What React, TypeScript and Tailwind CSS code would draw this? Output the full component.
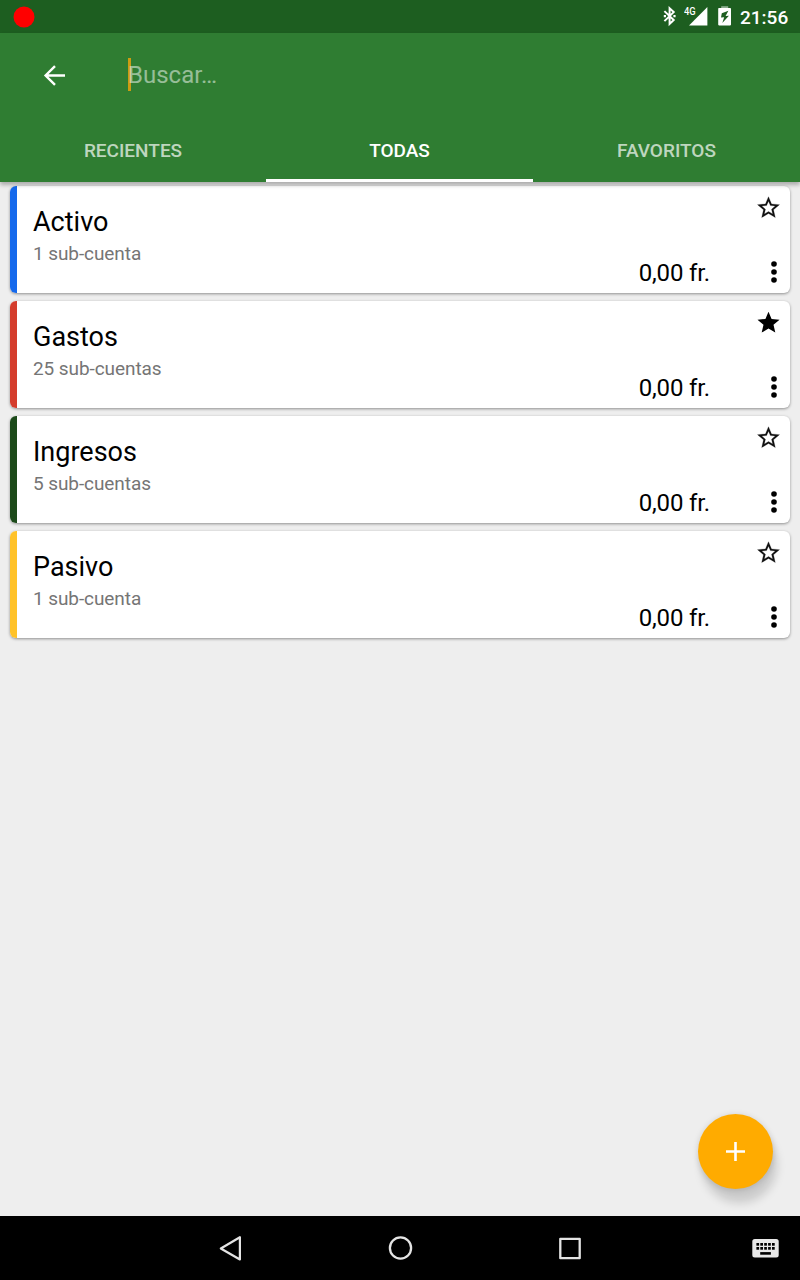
import React from "react";

type Account = { name: string; detail: string; stripe: string; favorite: boolean };

const accounts: Account[] = [
  { name: "Activo", detail: "1 sub-cuenta", stripe: "bg-[#1569ec]", favorite: false },
  { name: "Gastos", detail: "25 sub-cuentas", stripe: "bg-[#d43c2c]", favorite: true },
  { name: "Ingresos", detail: "5 sub-cuentas", stripe: "bg-[#1c4a1a]", favorite: false },
  { name: "Pasivo", detail: "1 sub-cuenta", stripe: "bg-[#ffc229]", favorite: false },
];

function StatusBar() {
  return (
    <div className="flex h-[33px] shrink-0 items-center bg-[#1d5e20] pl-[13px] pr-[11px] text-white">
      <svg width="22" height="22" viewBox="0 0 22 22">
        <circle cx="11" cy="11" r="10.5" fill="#ff0000" />
      </svg>
      <div className="ml-auto flex h-full items-center">
        <svg className="mr-[7px]" width="14" height="33" viewBox="0 0 14 33" fill="none" stroke="#fff" strokeWidth="2">
          <path d="M1.4 11.1l9.3 9-4.1 3.8V8.3l4.1 3.8-9.3 9" />
          <path d="M0.8 15h2.2v2.3H0.8zM10.4 15h2.2v2.3h-2.2z" fill="#fff" stroke="none" />
        </svg>
        <div className="mr-[10px] flex h-full w-[24px] items-start">
          <span className="mt-[6px] w-0 origin-left scale-x-[0.85] font-[Roboto] text-[11px] leading-[12px] font-medium">4G</span>
          <svg width="24" height="33" viewBox="0 0 24 33">
            <path d="M23.4 7v18.4H5z" fill="#fff" />
          </svg>
        </div>
        <svg className="mr-[8px]" width="14" height="33" viewBox="0 0 14 33">
          <path d="M3.2 6.2h7V8h-7z" fill="#8eaf90" />
          <path d="M1 8h11.2q.8 0 .8.8v15.8q0 .8-.8.8H1q-.8 0-.8-.8V8.8Q.2 8 1 8z" fill="#fff" />
          <path d="M10.4 10.8L3.8 13.2 3 17.5l3.2-.3-1.9 5.7 6.6-7.2-3.3.2z" fill="#1d5e20" />
        </svg>
        <span className="w-[49px] whitespace-nowrap pt-[2px] text-[19px] leading-[22px] font-medium">21:56</span>
      </div>
    </div>
  );
}

function Header() {
  return (
    <header className="z-10 flex h-[149px] shrink-0 flex-col bg-[#2f7d32] text-white shadow-[0_3px_4px_rgba(0,0,0,0.28)]">
      <div className="flex h-[85px] items-center pl-[43px]">
        <svg width="24" height="24" viewBox="0 0 24 24" fill="none" stroke="#fff" strokeWidth="2.4">
          <path d="M12 2.2L2.6 11.5 12 20.8M2.6 11.5H22" />
        </svg>
        <div className="mb-[2px] ml-[61px] flex h-[33px] items-center">
          <span className="h-[33px] w-[3px] bg-[#cb9c12]" />
          <span className="-ml-[3px] text-[24px] leading-[32px] text-white/50">Buscar…</span>
        </div>
      </div>
      <nav className="grid h-[64px] grid-cols-[266px_267px_267px] grid-rows-[64px] text-center text-[19px] leading-[66px] font-medium">
        <span className="text-white/70">RECIENTES</span>
        <span className="h-[64px] border-b-[3px] border-white">TODAS</span>
        <span className="text-white/70">FAVORITOS</span>
      </nav>
    </header>
  );
}

function AccountCard({ account }: { account: Account }) {
  return (
    <article className="flex h-[107px] overflow-hidden rounded-[6px] bg-white shadow-[0_1px_3px_rgba(0,0,0,0.4)]">
      <div className={`w-[7px] ${account.stripe}`} />
      <div className="flex-1 pl-4 pt-5">
        <h2 className="text-[27px] leading-[32px] text-black">{account.name}</h2>
        <p className="text-[19px] leading-[32px] tracking-[-0.08px] text-[#757575]">{account.detail}</p>
      </div>
      <p className="self-end pb-1 text-[24px] leading-[32px] tracking-[-0.15px] text-black">0,00 fr.</p>
      <div className="flex w-[80px] flex-col items-end justify-between pb-2 pt-[9px]">
        <svg className="mr-[9px]" width="26" height="26" viewBox="-0.25 0.5 23.6 23.6" fill="#111">
          {account.favorite ? (
            <path d="M12 17.27L18.18 21l-1.64-7.03L22 9.24l-7.19-.61L12 2 9.19 8.63 2 9.24l5.46 4.73L5.82 21z" fill="#000" />
          ) : (
            <path d="M22 9.24l-7.19-.62L12 2 9.19 8.63 2 9.24l5.46 4.73L5.82 21 12 17.27 18.18 21l-1.63-7.03L22 9.24zM12 15.4l-3.76 2.27 1-4.28-3.32-2.88 4.38-.38L12 6.1l1.71 4.04 4.38.38-3.32 2.88 1 4.28L12 15.4z" stroke="#111" strokeWidth="0.2" />
          )}
        </svg>
        <svg className="mr-3" width="8" height="26" viewBox="0 0 8 26">
          <circle cx="4" cy="5" r="2.8" />
          <circle cx="4" cy="13" r="2.8" />
          <circle cx="4" cy="21" r="2.8" />
        </svg>
      </div>
    </article>
  );
}

function NavigationBar() {
  return (
    <footer className="z-10 flex h-[64px] shrink-0 items-center bg-black">
      <svg className="ml-[218px]" width="24" height="28" viewBox="0 0 24 28" fill="none" stroke="#e4e4e4" strokeWidth="2.2" strokeLinejoin="round">
        <path d="M21.9 3.2v22.3L2.8 14.5z" />
      </svg>
      <svg className="ml-[146px]" width="26" height="26" viewBox="0 0 26 26" fill="none" stroke="#e4e4e4" strokeWidth="2.3">
        <circle cx="12.5" cy="13" r="10.6" />
      </svg>
      <svg className="ml-[144px]" width="24" height="24" viewBox="0 0 24 24" fill="none" stroke="#e4e4e4" strokeWidth="2.3" strokeLinejoin="round">
        <rect x="2.3" y="2.8" width="19.4" height="19.4" />
      </svg>
      <svg className="ml-[170px]" width="27" height="20" viewBox="0 0 27 20">
        <rect x="0.3" y="1" width="26.4" height="18.6" rx="2.5" fill="#e8e8e8" />
        <g fill="#000">
          {[4.4, 8.3, 12.2, 16.1, 20].map((x) => (
            <g key={x}>
              <rect x={x} y="5" width="2.7" height="2.7" />
              <rect x={x} y="9" width="2.7" height="2.7" />
            </g>
          ))}
          <rect x="8.2" y="14.1" width="10.7" height="2.6" />
        </g>
      </svg>
    </footer>
  );
}

export default function App() {
  return (
    <div className="relative flex h-[1280px] w-[800px] flex-col overflow-hidden bg-[#eeeeee] font-[Roboto,sans-serif]">
      <StatusBar />
      <Header />
      <main className="flex flex-1 flex-col gap-2 px-[10px] pt-1">
        {accounts.map((account) => (
          <AccountCard key={account.name} account={account} />
        ))}
      </main>
      <button className="absolute bottom-[91px] right-[27px] flex size-[75px] items-center justify-center rounded-full bg-[#ffab00] shadow-[4px_14px_10px_rgba(0,0,0,0.15),0_1px_6px_rgba(0,0,0,0.15)]">
        <svg width="19" height="19" viewBox="0 0 19 19" stroke="#fff" strokeWidth="2.6">
          <path d="M9.5 0v19M0 9.5h19" />
        </svg>
      </button>
      <NavigationBar />
    </div>
  );
}
